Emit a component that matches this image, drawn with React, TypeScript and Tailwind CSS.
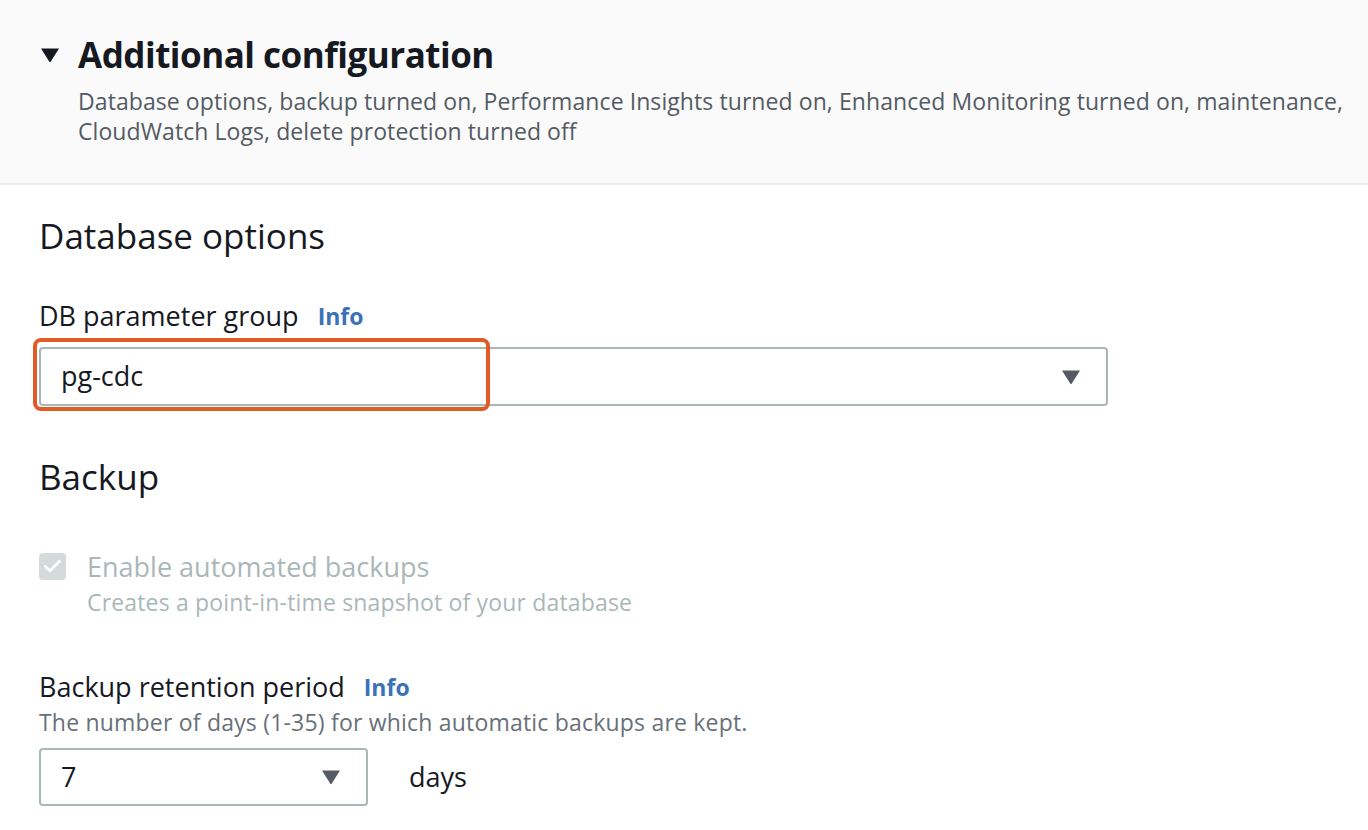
import { Check } from "lucide-react";

function Caret({ className }: { className?: string }) {
  return (
    <svg viewBox="0 0 20 16" className={className} fill="currentColor">
      <path d="M1 1.5h18L10.8 14.6a1 1 0 0 1-1.6 0z" />
    </svg>
  );
}

function InfoLink() {
  return <span className="ml-[19px] text-[23px] font-bold text-[#3a72b8]">Info</span>;
}

export default function App() {
  return (
    <div className="min-h-[830px] w-[1368px] bg-white font-['Open_Sans',sans-serif] text-[#16191f]">
      {/* Expandable header */}
      <header className="h-[185px] border-b-2 border-[#eaeded] bg-[#fafafa] pl-[40px] pt-[33px]">
        <div className="flex items-center">
          <Caret className="mr-[18px] h-[16px] w-[20px] text-[#16191f]" />
          <h2 className="text-[35px] font-bold leading-[44px] tracking-[-0.5px]">Additional configuration</h2>
        </div>
        <p className="mt-[9px] pl-[38px] text-[23px] leading-[30px] tracking-[0.08px] text-[#545b64]">
          Database options, backup turned on, Performance Insights turned on, Enhanced Monitoring turned on, maintenance,
          <br />
          CloudWatch Logs, delete protection turned off
        </p>
      </header>

      <main className="px-[39px]">
        <h3 className="mt-[29px] text-[35px] leading-[44px]">Database options</h3>

        <div className="mt-[42px] flex items-center text-[27px] leading-[32px]">
          DB parameter group <InfoLink />
        </div>
        <div className="relative mt-[15px] w-[1069px]">
          <div className="flex h-[59px] items-center justify-between rounded-[4px] border-2 border-[#aab7b8] pl-[20px] pr-[25px] text-[27px]">
            <span>pg-cdc</span>
            <Caret className="h-[16px] w-[20px] text-[#545b64]" />
          </div>
          <div className="absolute left-[-6px] top-[-9px] h-[73px] w-[457px] rounded-[8px] border-[4px] border-[#e05b26]" />
        </div>

        <h3 className="mt-[49px] text-[35px] leading-[44px]">Backup</h3>

        <div className="mt-[52px] flex">
          <div className="mt-[2px] flex h-[27px] w-[27px] items-center justify-center rounded-[4px] bg-[#d5dbdb]">
            <Check className="h-[21px] w-[21px] text-white" strokeWidth={3.2} />
          </div>
          <div className="ml-[21px]">
            <div className="text-[27px] leading-[32px] text-[#aab7b8]">Enable automated backups</div>
            <div className="mt-[4px] text-[23px] leading-[30px] tracking-[0.16px] text-[#aab7b8]">
              Creates a point-in-time snapshot of your database
            </div>
          </div>
        </div>

        <div className="mt-[54px] flex items-center text-[27px] leading-[32px]">
          Backup retention period <InfoLink />
        </div>
        <p className="mt-[4px] text-[23px] leading-[30px] tracking-[0.2px] text-[#687078]">
          The number of days (1-35) for which automatic backups are kept.
        </p>
        <div className="mt-[11px] flex items-center">
          <div className="flex h-[58px] w-[329px] items-center justify-between rounded-[4px] border-2 border-[#aab7b8] pl-[20px] pr-[25px] text-[27px]">
            <span>7</span>
            <Caret className="h-[16px] w-[20px] text-[#545b64]" />
          </div>
          <span className="ml-[41px] text-[27px]">days</span>
        </div>
      </main>
    </div>
  );
}
